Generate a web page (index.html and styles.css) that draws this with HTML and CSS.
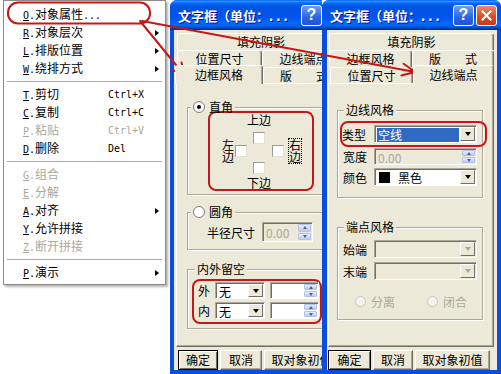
FILE: index.html
```html
<!DOCTYPE html>
<html lang="zh-CN">
<head>
    <meta charset="UTF-8">
    <meta name="viewport" content="width=device-width, initial-scale=1.0">
    <title>文字框属性</title>
    <link rel="stylesheet" href="styles.css">
</head>
<body>
    <div class="screen">
        <div class="menu-area">
            <div class="menu">
                <div class="item"><span class="label"><span class="latin"><u>O</u>.</span>对象属性<span class="latin">...</span></span></div>
                <div class="item"><span class="label"><span class="latin"><u>R</u>.</span>对象层次</span><span class="sub"></span></div>
                <div class="item"><span class="label"><span class="latin"><u>L</u>.</span>排版位置</span><span class="sub"></span></div>
                <div class="item"><span class="label"><span class="latin"><u>W</u>.</span>绕排方式</span><span class="sub"></span></div>
                <div class="sep"></div>
                <div class="item"><span class="label"><span class="latin"><u>T</u>.</span>剪切</span><span class="latin">Ctrl+X</span></div>
                <div class="item"><span class="label"><span class="latin"><u>C</u>.</span>复制</span><span class="latin">Ctrl+C</span></div>
                <div class="item off"><span class="label"><span class="latin"><u>P</u>.</span>粘贴</span><span class="latin">Ctrl+V</span></div>
                <div class="item"><span class="label"><span class="latin"><u>D</u>.</span>删除</span><span class="latin">Del</span></div>
                <div class="sep"></div>
                <div class="item off"><span class="label"><span class="latin"><u>G</u>.</span>组合</span></div>
                <div class="item off"><span class="label"><span class="latin"><u>E</u>.</span>分解</span></div>
                <div class="item"><span class="label"><span class="latin"><u>A</u>.</span>对齐</span><span class="sub"></span></div>
                <div class="item"><span class="label"><span class="latin"><u>Y</u>.</span>允许拼接</span></div>
                <div class="item off"><span class="label"><span class="latin"><u>Z</u>.</span>断开拼接</span></div>
                <div class="sep"></div>
                <div class="item"><span class="label"><span class="latin"><u>P</u>.</span>演示</span><span class="sub"></span></div>
            </div>
        </div>

        <!-- 边框风格 page -->
        <div class="dialog dialog-one">
            <div class="titlebar">
                <span class="title">文字框（单位：<span class="dots">...</span></span>
                <span class="tbtn help">?</span>
            </div>
            <div class="client">
                <div class="tabs">
                    <div class="tab-row"><span class="tab fill">填充阴影</span></div>
                    <div class="tab-row mid"><span class="tab t-size">位置尺寸</span><span class="tab fill">边线端点</span></div>
                    <div class="tab-row last"><span class="tab t-frame current">边框风格</span><span class="tab fill">版　　式</span></div>
                </div>
                <div class="panel">
                    <fieldset class="group g-corner">
                        <legend><span class="radio on"></span>直角</legend>
                        <div class="mark sides">
                            <div class="side-col"><span class="vtext">左边</span><span class="check"></span></div>
                            <div class="center-col">
                                <span class="cap">上边</span>
                                <span class="check top"></span>
                                <span class="check bottom"></span>
                                <span class="cap low">下边</span>
                            </div>
                            <div class="side-col"><span class="check"></span><span class="vtext focus">右边</span></div>
                        </div>
                    </fieldset>

                    <fieldset class="group g-round">
                        <legend><span class="radio"></span>圆角</legend>
                        <div class="radius-row">
                            <span>半径尺寸</span>
                            <div class="field spin r-spin off">
                                <span class="value">0.00</span>
                                <span class="arrows"><i class="up"></i><i class="down"></i></span>
                            </div>
                        </div>
                    </fieldset>

                    <fieldset class="group g-gap">
                        <legend>内外留空</legend>
                        <div class="mark gap-box">
                            <div class="gap-row">
                                <span class="tag">外</span>
                                <div class="field combo g-combo"><span class="value">无</span><span class="drop"></span></div>
                                <div class="field spin g-spin"><span class="value"></span><span class="arrows"><i class="up"></i><i class="down"></i></span></div>
                            </div>
                            <div class="gap-row">
                                <span class="tag">内</span>
                                <div class="field combo g-combo"><span class="value">无</span><span class="drop"></span></div>
                                <div class="field spin g-spin"><span class="value"></span><span class="arrows"><i class="up"></i><i class="down"></i></span></div>
                            </div>
                        </div>
                    </fieldset>
                </div>
                <div class="buttons">
                    <span class="btn default b-ok">确定</span>
                    <span class="btn b-cancel">取消</span>
                    <span class="btn b-reset">取对象初值</span>
                </div>
            </div>
        </div>

        <!-- 边线端点 page -->
        <div class="dialog dialog-two">
            <div class="titlebar">
                <span class="title">文字框（单位：<span class="dots">...</span></span>
                <span class="tbtn help">?</span>
                <span class="tbtn close">
                    <svg width="11" height="11" viewBox="0 0 11 11"><path d="M1.5 1.5 L9.5 9.5 M9.5 1.5 L1.5 9.5" stroke="#fff" stroke-width="2" stroke-linecap="square"/></svg>
                </span>
            </div>
            <div class="client">
                <div class="tabs">
                    <div class="tab-row"><span class="tab fill">填充阴影</span></div>
                    <div class="tab-row mid"><span class="tab t-frame">边框风格</span><span class="tab fill">版　　式</span></div>
                    <div class="tab-row last"><span class="tab t-size">位置尺寸</span><span class="tab fill current">边线端点</span></div>
                </div>
                <div class="panel">
                    <fieldset class="group g-line">
                        <legend>边线风格</legend>
                        <div class="mark type-box">
                            <span class="name">类型</span>
                            <div class="field combo wide"><span class="value"><span class="sel">空线</span></span><span class="drop"></span></div>
                        </div>
                        <div class="frow w-row">
                            <span class="name">宽度</span>
                            <div class="field spin wide off"><span class="value">0.00</span><span class="arrows"><i class="up"></i><i class="down"></i></span></div>
                        </div>
                        <div class="frow c-row">
                            <span class="name">颜色</span>
                            <div class="field combo wide"><span class="value"><span class="swatch"></span>黑色</span><span class="drop"></span></div>
                        </div>
                    </fieldset>

                    <fieldset class="group g-end">
                        <legend>端点风格</legend>
                        <div class="frow s-row">
                            <span class="name">始端</span>
                            <div class="field combo wide off"><span class="value"></span><span class="drop"></span></div>
                        </div>
                        <div class="frow e-row">
                            <span class="name">末端</span>
                            <div class="field combo wide off"><span class="value"></span><span class="drop"></span></div>
                        </div>
                        <div class="radios">
                            <span class="radio off"></span><span class="rtext">分离</span>
                            <span class="radio off second"></span><span class="rtext">闭合</span>
                        </div>
                    </fieldset>
                </div>
                <div class="buttons">
                    <span class="btn default b-ok">确定</span>
                    <span class="btn b-cancel">取消</span>
                    <span class="btn b-reset">取对象初值</span>
                </div>
            </div>
        </div>

        <svg class="marks" width="501" height="374" viewBox="0 0 501 374">
            <g fill="none" stroke="#c81616" stroke-width="2" stroke-linecap="round" stroke-linejoin="round">
                <rect x="8" y="2.5" width="142" height="21" rx="10"/>
                <path d="M140 21 L185 76 M181.5 62.4 L185 76 L172.4 69.9"/>
                <path d="M142 21 L415 72 M403.6 63.8 L415 72 L401.4 75.5"/>
            </g>
        </svg>
    </div>
</body>
</html>
```

FILE: styles.css
```css
* {
    box-sizing: border-box;
}

body {
    margin: 0;
    width: 501px;
    height: 374px;
    overflow: hidden;
    background: #fff;
    font-family: "Noto Sans CJK SC", "Liberation Sans", sans-serif;
    font-size: 12px;
    color: #000;
}

.screen {
    position: relative;
    display: flex;
    height: 374px;
}

.latin {
    font-family: "DejaVu Sans Mono", "Liberation Mono", monospace;
    font-size: 10px;
}

/* context menu */
.menu-area {
    width: 170px;
    flex-shrink: 0;
}

.menu {
    margin-left: 3px;
    width: 163px;
    background: #fff;
    border: 1px solid #8d8b83;
    padding: 5px 0 2px;
    box-shadow: 2px 2px 2px rgba(0, 0, 0, 0.3);
}

.item {
    display: flex;
    align-items: center;
    height: 18px;
    line-height: 18px;
    padding-left: 19px;
    white-space: nowrap;
}

.item.off {
    color: #aca899;
}

.item .label {
    width: 85px;
}

.item .sub {
    margin-left: auto;
    margin-right: 6px;
    border-top: 3.5px solid transparent;
    border-bottom: 3.5px solid transparent;
    border-left: 4px solid #000;
}

.sep {
    height: 8px;
    padding: 3px 3px 0 3px;
}

.sep::before {
    content: "";
    display: block;
    height: 1px;
    background: #aca899;
}

/* dialog frame */
.dialog {
    flex-shrink: 0;
    height: 374px;
    display: flex;
    flex-direction: column;
    background: #0a4fdc;
    border-radius: 7px 7px 0 0;
    overflow: hidden;
    padding-bottom: 4px;
}

.dialog-one {
    width: 152px;
    border-radius: 7px 0 0 0;
}

.dialog-two {
    width: 179px;
}

.titlebar {
    height: 30px;
    flex-shrink: 0;
    display: flex;
    align-items: center;
    padding: 0 4px 0 8px;
    background: linear-gradient(to bottom, #0058ee 0%, #3593ff 4%, #288eff 6%, #127dff 8%, #036ffc 10%, #0262ee 14%, #0057e5 20%, #0054e3 24%, #0055eb 56%, #005bf5 66%, #026afe 76%, #0062ef 86%, #0052d6 92%, #0040ab 94%, #003092 100%);
    color: #fff;
    font-weight: bold;
    font-size: 13px;
    white-space: nowrap;
}

.dialog-one .titlebar {
    padding-right: 0;
}

.title {
    flex: 1;
    overflow: hidden;
    text-shadow: 1px 1px 0 #0f1089;
}

.dots {
    letter-spacing: 3px;
}

.tbtn {
    width: 21px;
    height: 21px;
    flex-shrink: 0;
    border: 1px solid #fff;
    border-radius: 3px;
    display: flex;
    align-items: center;
    justify-content: center;
}

.help {
    background: linear-gradient(#6d9cf9, #2b64e2 60%, #1f53d6);
    font-family: "Liberation Sans", sans-serif;
    font-size: 16px;
}

.close {
    margin-left: 2px;
    background: linear-gradient(#ec8a6b, #dd4c27 55%, #c23a18);
}

.client {
    flex: 1;
    background: #ece9d8;
    overflow: hidden;
    display: flex;
    flex-direction: column;
    align-items: flex-start;
    padding-top: 3px;
}

.dialog-one .client {
    margin-left: 4px;
}

.dialog-two .client {
    margin: 0 4px 0 5px;
}

/* tabs */
.tabs {
    flex-shrink: 0;
}

.dialog-one .tabs {
    margin-left: 3px;
    width: 168px;
}

.dialog-two .tabs {
    margin-left: 2px;
    width: 165px;
}

.tab-row {
    display: flex;
    align-items: flex-start;
    height: 17px;
}

.tab {
    height: 17px;
    border: 1px solid;
    border-bottom: 0;
    border-color: #fff #716f64 #716f64 #fff;
    border-radius: 3px 3px 0 0;
    box-shadow: inset -1px 0 0 #aca899;
    text-align: center;
    line-height: 16px;
    white-space: nowrap;
    overflow: hidden;
    background: #ece9d8;
}

.tab-row.mid .tab {
    line-height: 15px;
}

.tab-row.last {
    height: 16px;
}

.tab-row.last .tab {
    height: 16px;
    line-height: 15px;
}

.tab.fill {
    flex: 1;
}

.dialog-one .t-size {
    width: 85px;
}

.dialog-one .t-frame {
    width: 88px;
    margin-left: -2px;
}

.dialog-two .t-frame {
    width: 83px;
}

.dialog-two .t-size {
    width: 83px;
    margin-left: 1px;
}

.tab-row .tab.current {
    position: relative;
    z-index: 1;
    height: 19px;
    margin-top: -2px;
    line-height: 17px;
}

.panel {
    flex-shrink: 0;
    height: 264px;
    border: 1px solid;
    border-color: #fff #716f64 #716f64 #fff;
    box-shadow: inset -1px -1px 0 #aca899;
}

.dialog-one .panel {
    margin-left: 2px;
    width: 170px;
}

.dialog-two .panel {
    margin-left: 1px;
    width: 166px;
}

/* group boxes */
.group {
    margin: 0;
    padding: 0;
    min-width: 0;
    width: 146px;
    border: 1px solid #aca899;
    box-shadow: 1px 1px 0 #fff, inset 1px 1px 0 #fff;
}

.group legend {
    padding: 0 2px;
    height: 14px;
    line-height: 14px;
    display: flex;
    align-items: center;
    gap: 4px;
    background: #ece9d8;
}

.g-corner {
    margin: 16px 0 0 10px;
    padding-bottom: 3px;
}

.g-corner legend,
.g-round legend {
    margin-left: 3px;
}

.g-round {
    margin: 10px 0 0 10px;
    padding-bottom: 7px;
}

.g-gap {
    margin: 12px 0 0 10px;
    padding-bottom: 4px;
}

.g-gap legend {
    margin-left: 7px;
}

.g-line {
    margin: 19px 0 0 8px;
    padding-bottom: 11px;
}

.g-end {
    margin: 22px 0 0 8px;
    padding-bottom: 11px;
}

.g-line legend,
.g-end legend {
    margin-left: 6px;
}

.mark {
    border: 2px solid #c41818;
    border-radius: 8px;
}

/* border sides picker */
.sides {
    margin: -3px 0 0 20px;
    width: 106px;
    height: 80px;
    display: flex;
    padding-left: 12px;
}

.side-col {
    align-self: center;
    display: flex;
    align-items: center;
}

.side-col .check {
    margin-left: 1px;
}

.center-col {
    width: 24px;
    display: flex;
    flex-direction: column;
    align-items: center;
}

.cap {
    line-height: 13px;
    height: 13px;
    white-space: nowrap;
}

.cap.low {
    margin-top: 2px;
}

.check.top {
    margin-top: 6px;
}

.check.bottom {
    margin-top: 18px;
}

.vtext {
    width: 12px;
    line-height: 12px;
}

.vtext.focus {
    margin-left: 5px;
    outline: 1px dotted #000;
}

.check {
    width: 12px;
    height: 12px;
    flex-shrink: 0;
    background: #fff;
    border: 1px solid;
    border-color: #9a9a9a #e4e2d8 #e4e2d8 #9a9a9a;
}

.radio {
    width: 12px;
    height: 12px;
    flex-shrink: 0;
    border-radius: 50%;
    border: 1px solid #7b7b7b;
    background: #fff;
    display: inline-flex;
    align-items: center;
    justify-content: center;
}

.radio.on::after {
    content: "";
    width: 4px;
    height: 4px;
    border-radius: 50%;
    background: #000;
}

.radio.off {
    width: 11px;
    height: 11px;
    border-color: #c9c7ba;
    background: #f4f3ee;
}

/* inputs */
.field {
    display: flex;
    flex-shrink: 0;
    background: #fff;
    border: 1px solid;
    border-color: #aca899 #fff #fff #aca899;
    box-shadow: inset 1px 1px 0 #716f64;
    padding: 1px 1px 0 1px;
}

.field .value {
    flex: 1;
    padding-left: 2px;
    display: flex;
    align-items: center;
    white-space: nowrap;
    overflow: hidden;
}

.field.off {
    background: #ece9d8;
}

.field.off .value {
    color: #aca899;
}

.drop {
    width: 15px;
    margin-bottom: 1px;
    background: #ece9d8;
    border: 1px solid;
    border-color: #fff #716f64 #716f64 #fff;
    display: flex;
    align-items: center;
    justify-content: center;
}

.drop::after {
    content: "";
    border-left: 3.5px solid transparent;
    border-right: 3.5px solid transparent;
    border-top: 4px solid #000;
}

.field.off .drop::after {
    border-top-color: #aca899;
}

.arrows {
    width: 13px;
    display: flex;
    flex-direction: column;
    gap: 1px;
    margin-bottom: 1px;
}

.arrows i {
    flex: 1;
    background: linear-gradient(#e6edfb, #bccbf0);
    border: 1px solid #b1c3ea;
    border-radius: 1px;
    display: flex;
    align-items: center;
    justify-content: center;
}

.arrows .up::after {
    content: "";
    border-left: 2.5px solid transparent;
    border-right: 2.5px solid transparent;
    border-bottom: 3px solid #4d6185;
}

.arrows .down::after {
    content: "";
    border-left: 2.5px solid transparent;
    border-right: 2.5px solid transparent;
    border-top: 3px solid #4d6185;
}

.radius-row {
    display: flex;
    align-items: center;
    gap: 7px;
    height: 20px;
    margin: 3px 0 0 19px;
}

.r-spin {
    width: 51px;
    height: 20px;
}

.gap-box {
    margin: 3px 0 0 4px;
    width: 130px;
    height: 45px;
    padding: 1px 0 0 4px;
    display: flex;
    flex-direction: column;
    gap: 3px;
}

.gap-row {
    display: flex;
    align-items: center;
    height: 17px;
}

.gap-row .tag {
    width: 12px;
    margin-right: 5px;
}

.g-combo {
    width: 50px;
    height: 17px;
}

.g-spin {
    width: 49px;
    height: 17px;
    margin-left: 5px;
}

/* 边线端点 page rows */
.type-box {
    margin: 4px 0 0 2px;
    width: 147px;
    height: 26px;
    display: flex;
    align-items: center;
}

.type-box .name {
    width: 24px;
    margin-right: 8px;
}

.frow {
    display: flex;
    align-items: center;
    padding-left: 5px;
}

.frow .name {
    width: 24px;
    margin-right: 7px;
}

.field.wide {
    width: 103px;
    height: 18px;
}

.w-row {
    margin-top: 1px;
    height: 17px;
}

.w-row .field.wide {
    height: 17px;
}

.c-row {
    margin-top: 3px;
    height: 18px;
}

.s-row {
    margin-top: 6px;
    height: 18px;
}

.e-row {
    margin-top: 4px;
    height: 18px;
}

.sel {
    background: #316ac5;
    color: #fff;
    width: 100%;
    margin-left: -1px;
    padding-left: 1px;
    line-height: 14px;
}

.swatch {
    width: 11px;
    height: 11px;
    background: #000;
    margin: 0 8px 0 1px;
}

.radios {
    display: flex;
    align-items: center;
    height: 14px;
    margin-top: 14px;
    padding-left: 17px;
    color: #aca899;
}

.radios .rtext {
    margin-left: 5px;
}

.radios .second {
    margin-left: 32px;
}

/* buttons */
.buttons {
    display: flex;
    gap: 2px;
    margin-top: 3px;
    height: 20px;
    flex-shrink: 0;
}

.dialog-one .buttons {
    margin-left: 4px;
}

.dialog-two .buttons {
    margin-left: 1px;
}

.btn {
    height: 20px;
    flex-shrink: 0;
    border: 1px solid;
    border-color: #fff #716f64 #716f64 #fff;
    box-shadow: inset -1px -1px 0 #aca899;
    text-align: center;
    line-height: 18px;
    white-space: nowrap;
}

.btn.default {
    border-color: #000;
    box-shadow: inset 1px 1px 0 #fff, inset -1px -1px 0 #716f64;
}

.dialog-one .b-ok { width: 40px; }
.dialog-one .b-cancel { width: 42px; }
.dialog-two .b-ok { width: 43px; }
.dialog-two .b-cancel { width: 40px; }
.b-reset { width: 75px; }

/* red annotation overlay */
.marks {
    position: absolute;
    left: 0;
    top: 0;
    pointer-events: none;
}
```
